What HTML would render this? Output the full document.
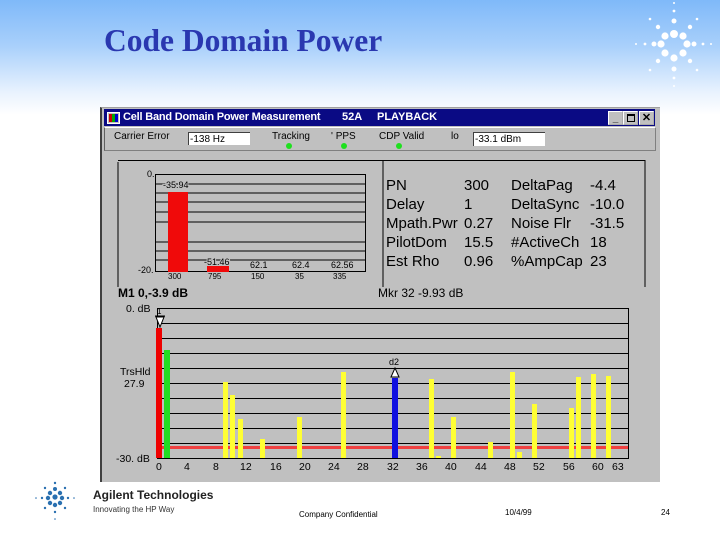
<!DOCTYPE html>
<html><head><meta charset="utf-8"><style>
body{margin:0;width:720px;height:540px;overflow:hidden;position:relative;background:#fff;font-family:"Liberation Sans",sans-serif}
.bg{position:absolute;left:0;top:0;width:720px;height:115px;background:linear-gradient(#7fb9f9 0%,#a9d0fb 40%,#e8f2fe 80%,#fff 100%)}
.t{position:absolute;white-space:nowrap}
</style></head><body>
<div class="bg"></div>
<div class="t" style="left:104px;top:23px;font:bold 31.5px 'Liberation Serif',serif;color:#2a38b0">Code Domain Power</div>
<svg class="t" style="left:620px;top:0" width="100" height="100">
<g fill="#fff">
<circle cx="54" cy="34" r="4"/><circle cx="45" cy="36" r="3.6"/><circle cx="63" cy="36" r="3.6"/>
<circle cx="41" cy="44" r="3.6"/><circle cx="67" cy="44" r="3.6"/><circle cx="45" cy="53" r="3.6"/><circle cx="63" cy="53" r="3.6"/><circle cx="54" cy="58" r="3.6"/>
<circle cx="54" cy="21" r="2.5"/><circle cx="54" cy="69" r="2.5"/><circle cx="34" cy="44" r="2.5"/><circle cx="74" cy="44" r="2.5"/>
<circle cx="38" cy="27" r="2.2"/><circle cx="70" cy="27" r="2.2"/><circle cx="38" cy="61" r="2.2"/><circle cx="70" cy="61" r="2.2"/>
<circle cx="54" cy="11" r="1.4"/><circle cx="54" cy="78" r="1.4"/><circle cx="25" cy="44" r="1.4"/><circle cx="83" cy="44" r="1.4"/>
<circle cx="30" cy="19" r="1.3"/><circle cx="77" cy="19" r="1.3"/><circle cx="30" cy="70" r="1.3"/><circle cx="77" cy="70" r="1.3"/>
<circle cx="54" cy="3" r="1"/><circle cx="54" cy="86" r="1"/><circle cx="16" cy="44" r="1"/><circle cx="91" cy="44" r="1"/>
</g></svg>

<div class="t" style="left:100px;top:107px;width:558px;height:374px;background:#c0c0c0;border-top:1px solid #a0a0a0;border-left:2px solid #404040"></div>
<div class="t" style="left:104px;top:109px;width:551px;height:17px;background:#0a0a84"></div>
<div class="t" style="left:107px;top:112px;width:11px;height:10px;background:#c0c0c0;border:1px solid #fff"><div style="position:absolute;left:1px;top:1px;width:3px;height:8px;background:#c00"></div><div style="position:absolute;left:4px;top:1px;width:3px;height:8px;background:#0a0"></div><div style="position:absolute;left:7px;top:1px;width:3px;height:8px;background:#00c"></div></div>
<div class="t" style="left:123px;top:111px;color:#fff;font:bold 11px 'Liberation Sans',sans-serif;letter-spacing:-0.2px">Cell Band Domain Power Measurement</div>
<div class="t" style="left:342px;top:111px;color:#fff;font:bold 11px 'Liberation Sans',sans-serif">52A</div>
<div class="t" style="left:377px;top:111px;color:#fff;font:bold 11px 'Liberation Sans',sans-serif">PLAYBACK</div>
<div class="t" style="left:608px;top:111px;width:13px;height:12px;background:#c0c0c0;border:1px outset #fff;font:bold 10px sans-serif;text-align:center;line-height:13px">_</div>
<div class="t" style="left:623px;top:111px;width:13px;height:12px;background:#c0c0c0;border:1px outset #fff"><div style="margin:2px 3px;width:6px;height:5px;border:1px solid #000;border-top-width:2px"></div></div>
<div class="t" style="left:639px;top:111px;width:13px;height:12px;background:#c0c0c0;border:1px outset #fff;font:bold 11px sans-serif;text-align:center;line-height:12px">✕</div>
<div class="t" style="left:104px;top:127px;width:550px;height:22px;border:1px solid #808080;border-top-color:#fff;border-left-color:#606060"></div>
<div class="t" style="left:114px;top:131px;font-size:10px">Carrier Error</div>
<div class="t" style="left:188px;top:132px;width:62px;height:13px;background:#fff;border-top:1px solid #404040;border-left:1px solid #404040;font-size:10px;line-height:14px;padding-left:1px;box-sizing:border-box">-138 Hz</div>
<div class="t" style="left:272px;top:131px;font-size:10px">Tracking</div>
<div class="t" style="left:331px;top:131px;font-size:10px">' PPS</div>
<div class="t" style="left:379px;top:131px;font-size:10px">CDP Valid</div>
<div class="t" style="left:451px;top:131px;font-size:10px">lo</div>
<div class="t" style="left:473px;top:132px;width:72px;height:14px;background:#fff;border-top:1px solid #404040;border-left:1px solid #404040;font-size:10px;line-height:14px;padding-left:1px;box-sizing:border-box">-33.1 dBm</div>
<div class="t" style="left:286px;top:143px;width:6px;height:6px;border-radius:3px;background:#1ee01e"></div>
<div class="t" style="left:341px;top:143px;width:6px;height:6px;border-radius:3px;background:#1ee01e"></div>
<div class="t" style="left:396px;top:143px;width:6px;height:6px;border-radius:3px;background:#1ee01e"></div>

<svg class="t" style="left:100px;top:107px" width="558" height="374" font-family="Liberation Sans, sans-serif">
<g fill="none" stroke="#000" stroke-width="1">
<polyline points="18,55 18,180"/><line x1="18" y1="53.5" x2="545" y2="53.5"/><line x1="545" y1="53" x2="545" y2="180"/>
<line x1="283" y1="53" x2="283" y2="180"/>
<rect x="55.5" y="67.5" width="210" height="97" />
<line x1="55" y1="77" x2="265" y2="77"/><line x1="55" y1="86" x2="265" y2="86"/><line x1="55" y1="95" x2="265" y2="95"/><line x1="55" y1="105" x2="265" y2="105"/><line x1="55" y1="115" x2="265" y2="115"/><line x1="55" y1="135" x2="265" y2="135"/><line x1="55" y1="144" x2="265" y2="144"/><line x1="55" y1="153" x2="265" y2="153"/>
</g>
<rect x="68" y="85" width="20" height="80" fill="#f00a0a"/>
<rect x="107" y="159" width="22" height="6" fill="#f00a0a"/>
<g font-size="9" fill="#000">
<text x="47" y="70">0.</text><text x="38" y="166">-20.</text>
<text x="63" y="81" style="paint-order:stroke" stroke="#c0c0c0" stroke-width="2">-35.94</text>
<text x="104" y="158" style="paint-order:stroke" stroke="#c0c0c0" stroke-width="2">-51.46</text>
<text x="150" y="161" style="paint-order:stroke" stroke="#c0c0c0" stroke-width="2">62.1</text>
<text x="192" y="161" style="paint-order:stroke" stroke="#c0c0c0" stroke-width="2">62.4</text>
<text x="231" y="161" style="paint-order:stroke" stroke="#c0c0c0" stroke-width="2">62.56</text>
<text x="68" y="172" font-size="8">300</text><text x="108" y="172" font-size="8">795</text><text x="151" y="172" font-size="8">150</text><text x="195" y="172" font-size="8">35</text><text x="233" y="172" font-size="8">335</text>
</g>
<g font-size="15" fill="#000">
<text x="286" y="83">PN</text><text x="364" y="83">300</text><text x="411" y="83">DeltaPag</text><text x="490" y="83">-4.4</text>
<text x="286" y="102">Delay</text><text x="364" y="102">1</text><text x="411" y="102">DeltaSync</text><text x="490" y="102">-10.0</text>
<text x="286" y="121">Mpath.Pwr</text><text x="364" y="121">0.27</text><text x="411" y="121">Noise Flr</text><text x="490" y="121">-31.5</text>
<text x="286" y="140">PilotDom</text><text x="364" y="140">15.5</text><text x="411" y="140">#ActiveCh</text><text x="490" y="140">18</text>
<text x="286" y="159">Est Rho</text><text x="364" y="159">0.96</text><text x="411" y="159">%AmpCap</text><text x="490" y="159">23</text>
</g>
<text x="18" y="190" font-size="12" font-weight="bold">M1 0,-3.9 dB</text>
<text x="278" y="190" font-size="12">Mkr 32 -9.93 dB</text>
<g stroke="#000" fill="none">
<rect x="57.5" y="201.5" width="471" height="150"/>
<line x1="57" y1="216.5" x2="528" y2="216.5"/><line x1="57" y1="231.5" x2="528" y2="231.5"/><line x1="57" y1="246.5" x2="528" y2="246.5"/><line x1="57" y1="261.5" x2="528" y2="261.5"/><line x1="57" y1="276.5" x2="528" y2="276.5"/><line x1="57" y1="291.5" x2="528" y2="291.5"/><line x1="57" y1="306.5" x2="528" y2="306.5"/><line x1="57" y1="321.5" x2="528" y2="321.5"/><line x1="57" y1="336.5" x2="528" y2="336.5"/>
</g>
<rect x="57" y="339" width="471" height="3" fill="#f04040"/>
<g transform="translate(-100,-107)">
<rect x="156" y="328" width="6" height="130" fill="#e00"/>
<rect x="164" y="350" width="6" height="108" fill="#22dd22"/>
<g fill="#ffff33">
<rect x="223" y="382" width="5" height="76"/><rect x="230" y="395" width="5" height="63"/><rect x="238" y="419" width="5" height="39"/>
<rect x="260" y="439" width="5" height="19"/><rect x="297" y="417" width="5" height="41"/><rect x="341" y="372" width="5" height="86"/>
<rect x="429" y="379" width="5" height="79"/><rect x="436" y="456" width="5" height="2"/><rect x="451" y="417" width="5" height="41"/>
<rect x="488" y="442" width="5" height="16"/><rect x="510" y="372" width="5" height="86"/><rect x="517" y="452" width="5" height="6"/>
<rect x="532" y="404" width="5" height="54"/><rect x="569" y="408" width="5" height="50"/><rect x="576" y="377" width="5" height="81"/>
<rect x="591" y="374" width="5" height="84"/><rect x="606" y="376" width="5" height="82"/>
</g>
<rect x="392" y="378" width="6" height="80" fill="#1010e0"/>
<polygon points="156,317 164,317 160,327" fill="#fff" stroke="#000"/><line x1="155" y1="316" x2="165" y2="316" stroke="#000"/>
<text x="157" y="314" font-size="8">1</text>
<polygon points="391,377 399,377 395,368" fill="#fff" stroke="#000"/>
<text x="389" y="365" font-size="9">d2</text>
</g>
<g font-size="10.5" fill="#000">
<text x="26" y="205">0. dB</text><text x="20" y="268">TrsHld</text><text x="24" y="280">27.9</text><text x="16" y="355">-30. dB</text>
<text x="56" y="363">0</text><text x="84" y="363">4</text><text x="113" y="363">8</text><text x="140" y="363">12</text><text x="170" y="363">16</text><text x="199" y="363">20</text><text x="228" y="363">24</text><text x="257" y="363">28</text><text x="287" y="363">32</text><text x="316" y="363">36</text><text x="345" y="363">40</text><text x="375" y="363">44</text><text x="404" y="363">48</text><text x="433" y="363">52</text><text x="463" y="363">56</text><text x="492" y="363">60</text><text x="512" y="363">63</text>
</g>
</svg>

<svg class="t" style="left:28px;top:476px" width="50" height="48"><g fill="#2a70b0">
<circle cx="27" cy="21" r="2.6"/><circle cx="22" cy="17" r="2.2"/><circle cx="32" cy="17" r="2.2"/><circle cx="20" cy="22" r="2.2"/><circle cx="34" cy="22" r="2.2"/><circle cx="22" cy="27" r="2.2"/><circle cx="32" cy="27" r="2.2"/><circle cx="27" cy="29" r="2.2"/><circle cx="27" cy="13" r="2"/>
<circle cx="27" cy="7" r="1.2"/><circle cx="27" cy="36" r="1.2"/><circle cx="14" cy="22" r="1.2"/><circle cx="40" cy="22" r="1.2"/><circle cx="17" cy="12" r="1.2"/><circle cx="37" cy="12" r="1.2"/><circle cx="17" cy="32" r="1.2"/><circle cx="37" cy="32" r="1.2"/>
<circle cx="27" cy="43" r="0.8"/><circle cx="8" cy="22" r="0.8"/><circle cx="46" cy="22" r="0.8"/></g></svg>
<div class="t" style="left:93px;top:488px;font-weight:bold;font-size:12px;color:#222">Agilent Technologies</div>
<div class="t" style="left:93px;top:505px;font-size:8px;color:#333">Innovating the HP Way</div>
<div class="t" style="left:299px;top:510px;font-size:8px">Company Confidential</div>
<div class="t" style="left:505px;top:508px;font-size:8px">10/4/99</div>
<div class="t" style="left:661px;top:508px;font-size:8px">24</div>
</body></html>
